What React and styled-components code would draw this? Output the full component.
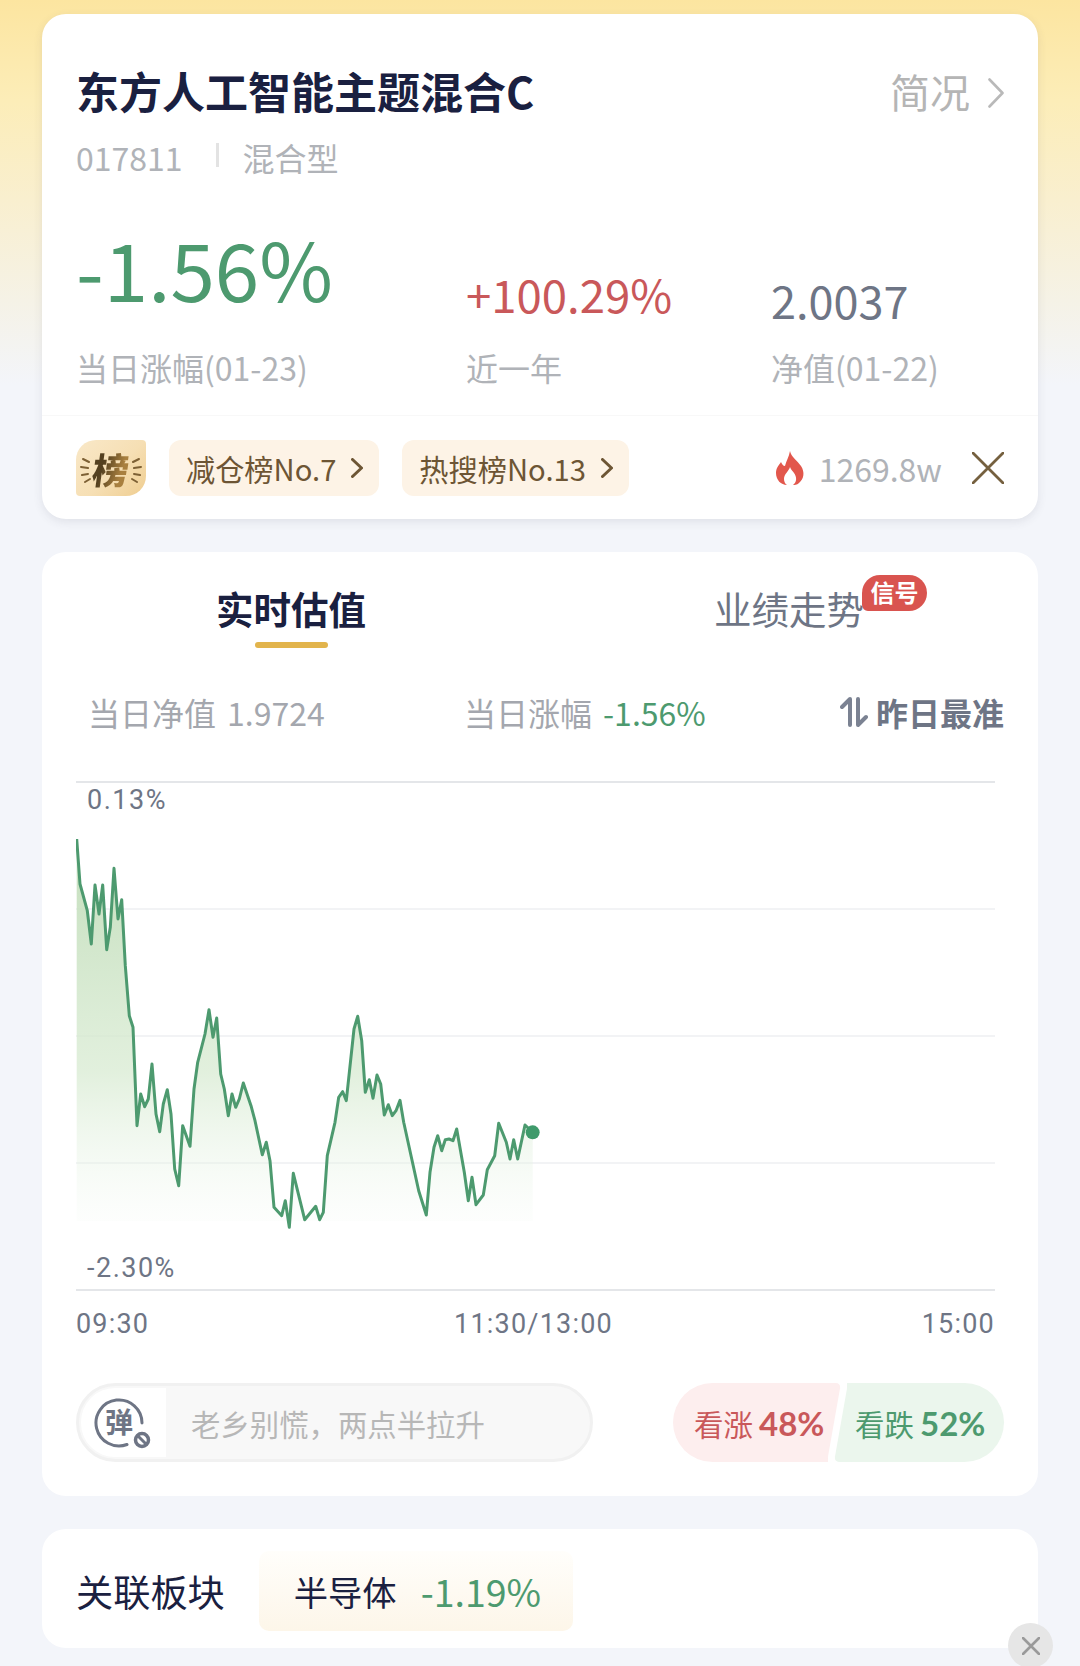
import React from 'react';
import styled, { createGlobalStyle } from 'styled-components';

const GlobalStyle = createGlobalStyle`
  html, body {
    margin: 0;
    padding: 0;
    background: #f3f5fa;
  }
  * {
    box-sizing: border-box;
  }
`;

const Page = styled.div`
  position: relative;
  width: 1080px;
  height: 1666px;
  overflow: hidden;
  padding: 14px 42px 0;
  display: flex;
  flex-direction: column;
  gap: 32px;
  font-family: "Noto Sans CJK SC", "Noto Sans", sans-serif;
  background: linear-gradient(180deg, #fce5a0 0, #fcedb8 100px, #f9efcf 200px, #f5f2e6 300px, #f3f5fa 385px);
`;

const Card = styled.section`
  background: #fff;
  border-radius: 24px;
`;

const FundCard = styled(Card)`
  height: 505px;
  margin-bottom: 1px;
  display: flex;
  flex-direction: column;
  box-shadow: 0 3px 10px rgba(60, 60, 80, 0.1);
`;

const FundHead = styled.div`
  flex: 1;
  padding: 48px 34px 0;
`;

const TitleRow = styled.div`
  display: flex;
  justify-content: space-between;
  align-items: center;
  height: 56px;
`;

const Title = styled.h1`
  margin: 0;
  font-size: 43px;
  font-weight: 700;
  color: #1a2040;
  line-height: 56px;
`;

const Brief = styled.div`
  display: flex;
  align-items: center;
  gap: 18px;
  margin-top: 2px;
  font-size: 40px;
  line-height: 56px;
  color: #b5b5b5;
  svg {
    margin-top: 3px;
  }
`;

const SubRow = styled.div`
  display: flex;
  align-items: center;
  height: 40px;
  margin-top: 19px;
  font-size: 32px;
  line-height: 40px;
  color: #b0b3b8;
`;

const SubDivider = styled.i`
  width: 3px;
  height: 24px;
  margin: -4px 24px 0 33px;
  background: #e3e3e3;
`;

const Stats = styled.div`
  display: grid;
  grid-template-columns: 390px 305px 1fr;
  height: 211px;
`;

const Stat = styled.div`
  display: flex;
  flex-direction: column;
  justify-content: flex-end;
`;

const StatValue = styled.div`
  font-size: ${(p) => p.$size}px;
  line-height: ${(p) => p.$size + 10}px;
  color: ${(p) => p.$color};
  margin-bottom: ${(p) => p.$gap}px;
`;

const StatLabel = styled.div`
  font-size: 32px;
  line-height: 42px;
  color: #b0b3b8;
  white-space: nowrap;
`;

const Strip = styled.div`
  height: 104px;
  flex: none;
  display: flex;
  align-items: center;
  padding: 0 34px;
  border-top: 1px solid #f8f8f8;
  border-radius: 0 0 24px 24px;
`;

const RankBadge = styled.div`
  position: relative;
  width: 70px;
  height: 56px;
  margin-right: 23px;
  display: flex;
  align-items: center;
  justify-content: center;
  border-radius: 20px 4px 20px 4px;
  background: linear-gradient(135deg, #f9e8c8 0, #f6dfb4 55%, #efcd90 100%);
  svg {
    position: absolute;
    left: 0;
    top: 0;
  }
`;

const RankGlyph = styled.span`
  font-size: 36px;
  line-height: 56px;
  font-weight: 900;
  transform: skewX(-8deg);
  background: linear-gradient(100deg, #54401f 30%, #a9803f 75%);
  -webkit-background-clip: text;
  background-clip: text;
  color: transparent;
`;

const RankTag = styled.div`
  height: 56px;
  display: flex;
  align-items: center;
  gap: 15px;
  padding: 0 16px 0 17px;
  margin-right: 23px;
  border-radius: 12px;
  background: #fdf3e6;
  color: #6d5534;
  font-size: 29.2px;
  white-space: nowrap;
`;

const Heat = styled.div`
  margin-left: auto;
  display: flex;
  align-items: center;
  gap: 14px;
  font-size: 32px;
  color: #b0b3b8;
`;

const StripClose = styled.div`
  margin-left: 30px;
  display: flex;
  align-items: center;
`;

const ChartCard = styled(Card)`
  height: 944px;
  padding-top: 32px;
`;

const Tabs = styled.div`
  display: grid;
  grid-template-columns: 1fr 1fr;
`;

const Tab = styled.div`
  position: relative;
  display: flex;
  flex-direction: column;
  align-items: center;
`;

const TabText = styled.div`
  position: relative;
  font-size: 37.5px;
  line-height: 48px;
  font-weight: ${(p) => (p.$active ? 700 : 400)};
  color: ${(p) => (p.$active ? '#1a2040' : '#6e7585')};
`;

const TabMark = styled.i`
  width: 73px;
  height: 6px;
  margin-top: 10px;
  border-radius: 3px;
  background: #e2b44c;
`;

const SignalBadge = styled.span`
  position: absolute;
  left: 148px;
  top: -9px;
  width: 65px;
  height: 36px;
  border-radius: 18px 18px 18px 6px;
  background: #d9544f;
  color: #fff;
  font-size: 24px;
  line-height: 34px;
  font-weight: 700;
  text-align: center;
`;

const InfoRow = styled.div`
  display: grid;
  grid-template-columns: 376px 1fr auto;
  align-items: center;
  height: 44px;
  margin-top: 41px;
  padding: 0 34px 0 46px;
  font-size: 32px;
  color: #a4a7ae;
`;

const InfoItem = styled.div`
  display: flex;
  gap: 11px;
  white-space: nowrap;
`;

const InfoValue = styled.span`
  color: ${(p) => p.$color || 'inherit'};
`;

const BestTag = styled.div`
  display: flex;
  align-items: center;
  gap: 8px;
  font-size: 32px;
  font-weight: 700;
  color: #6e7585;
`;

const Chart = styled.div`
  position: relative;
  height: 510px;
  margin: 48px 43px 0 34px;
  display: flex;
  flex-direction: column;
  justify-content: space-between;
`;

const GridLine = styled.i`
  display: block;
  height: 2px;
  background: ${(p) => (p.$strong ? '#e4e6e9' : '#f2f3f5')};
`;

const ChartPlot = styled.svg`
  position: absolute;
  left: 0;
  top: 0;
`;

const ChartLabel = styled.span`
  position: absolute;
  left: 11px;
  font-family: Roboto, sans-serif;
  font-size: 27px;
  line-height: 32px;
  letter-spacing: 1.5px;
  color: #6e7585;
  ${(p) => (p.$bottom ? 'bottom: 7px;' : 'top: 3px;')}
`;

const AxisRow = styled.div`
  display: grid;
  grid-template-columns: 1fr auto 1fr;
  margin: 17px 43px 0 34px;
  font-family: Roboto, sans-serif;
  font-size: 27px;
  line-height: 32px;
  letter-spacing: 1.2px;
  color: #6e7585;
  span:nth-child(2) {
    margin-right: 4px;
  }
  span:last-child {
    text-align: right;
  }
`;

const ActionRow = styled.div`
  display: flex;
  justify-content: space-between;
  align-items: center;
  margin-top: 43px;
  padding: 0 34px;
`;

const CommentBox = styled.div`
  width: 517px;
  height: 79px;
  display: flex;
  align-items: center;
  padding: 2px;
  overflow: hidden;
  border: 3px solid #f1f1f1;
  border-radius: 40px;
  background: #f8f8f8;
  color: #b7b7b7;
  font-size: 29.4px;
`;

const CommentIcon = styled.div`
  width: 85px;
  height: 100%;
  margin-right: 25px;
  display: flex;
  align-items: center;
  justify-content: center;
  background: #fff;
  border-radius: 34px 0 0 34px;
`;

const Votes = styled.div`
  display: flex;
  width: 331px;
  height: 79px;
`;

const Vote = styled.div`
  position: relative;
  z-index: 0;
  display: flex;
  align-items: center;
  gap: 6px;
  font-size: 29.5px;
  color: ${(p) => p.$color};
  background: ${(p) => p.$bg};
  ${(p) => (p.$left
    ? 'width: 155px; padding-left: 21px; border-radius: 40px 0 0 40px; margin-right: 19px;'
    : 'flex: 1; padding-left: 8px; border-radius: 0 40px 40px 0;')}
  &::after {
    content: '';
    position: absolute;
    z-index: -1;
    top: 0;
    bottom: 0;
    width: 20px;
    ${(p) => (p.$left ? 'right: -6px;' : 'left: -6px;')}
    background: ${(p) => p.$bg};
    border-radius: 5px;
    transform: skewX(-10deg);
  }
`;

const VotePct = styled.b`
  font-family: Lato, "Noto Sans", sans-serif;
  font-size: 33px;
  font-weight: 700;
`;

const SectorCard = styled(Card)`
  height: 119px;
  margin-top: 1px;
  display: flex;
  align-items: center;
  padding: 4px 34px 0;
`;

const SectorTitle = styled.div`
  font-size: 37.2px;
  color: #1a2040;
  margin-right: 34px;
`;

const SectorChip = styled.div`
  width: 314px;
  height: 80px;
  display: flex;
  align-items: center;
  gap: 24px;
  padding-left: 35px;
  border-radius: 10px;
  background: linear-gradient(180deg, #fffefb, #fdf6e9);
  font-size: 34.3px;
  color: #1a2040;
`;

const SectorPct = styled.span`
  font-size: 37.5px;
  color: #4d9a6f;
`;

const FloatClose = styled.div`
  position: absolute;
  left: 1008px;
  top: 1623px;
  width: 45px;
  height: 45px;
  border-radius: 50%;
  background: #e6e6e6;
  display: flex;
  align-items: center;
  justify-content: center;
`;

const Chevron = ({ size = 12, height = 22, width = 3, color = 'currentColor' }) => (
  <svg width={size} height={height} viewBox={`0 0 ${size} ${height}`} fill="none">
    <path d={`M1.5 1.5 L${size - 1.5} ${height / 2} L1.5 ${height - 1.5}`} stroke={color} strokeWidth={width} strokeLinecap="round" strokeLinejoin="round" />
  </svg>
);

const Cross = ({ size, color, width }) => (
  <svg width={size} height={size} viewBox={`0 0 ${size} ${size}`}>
    <path d={`M1 1 L${size - 1} ${size - 1} M${size - 1} 1 L1 ${size - 1}`} stroke={color} strokeWidth={width} strokeLinecap="round" />
  </svg>
);

const Flame = () => (
  <svg width="30" height="34" viewBox="0 0 30 34">
    <path
      fill="#e2574c"
      d="M15 0 C16 6 22 9 26 15 C30 21 29 28 24 32 C22 34 19 34 18 34 C22 31 22 26 19 22 C18 20 16 19 15 16 C14 20 9 23 9 28 C9 30 10 33 12 34 C6 34 1 29 1 22 C1 17 4 14 6 11 C7 13 8 15 10 15 C11 10 14 6 15 0 Z"
    />
  </svg>
);

const SortArrows = () => (
  <svg width="28" height="32" viewBox="0 0 28 32" fill="none" stroke="#7b8292" strokeWidth="4" strokeLinecap="round" strokeLinejoin="round">
    <path d="M10 29 V3 L2 11" />
    <path d="M18 3 V29 L26 21" />
  </svg>
);

const Laurels = () => (
  <svg width="70" height="56" viewBox="0 0 70 56" fill="none" stroke="#7d6034" strokeWidth="2" strokeLinecap="round">
    <path d="M7 19 L13 22 M5 27 L12 28 M6 35 L12 34 M9 42 L14 39" />
    <path d="M63 19 L57 22 M65 27 L58 28 M64 35 L58 34 M61 42 L56 39" />
  </svg>
);

const DanmakuIcon = () => (
  <svg width="60" height="60" viewBox="0 0 60 60" fill="none">
    <path d="M33 51.5 A23 23 0 1 1 48 30" stroke="#6e7585" strokeWidth="3" strokeLinecap="round" />
    <text x="25" y="40" textAnchor="middle" fontSize="28" fontWeight="700" fill="#6e7585" fontFamily="Noto Sans CJK SC, sans-serif">弹</text>
    <circle cx="48" cy="47" r="6.5" stroke="#6e7585" strokeWidth="3.5" fill="#fff" />
    <path d="M44 43 L52 51" stroke="#6e7585" strokeWidth="3" />
  </svg>
);

// 坐标按参考图量出来的，换算到图表自身
const rawPoints = [
  [80,240],[90,375],[112,455],[124,555],[135,378],[147,465],[158,378],[170,572],[181,505],[192,328],[204,480],[215,422],
  [226,620],[238,770],[249,805],[261,1100],[272,1005],[284,1043],[295,1020],[306,915],[318,1065],[329,1118],[340,1035],
  [352,992],[363,1065],[374,1230],[386,1280],[398,1100],[420,1162],[432,990],[443,910],[465,825],[477,752],[489,835],
  [500,777],[512,945],[523,990],[535,1070],[546,1005],[557,1045],[568,1020],[580,972],[603,1040],[615,1085],[637,1187],
  [649,1150],[660,1205],[672,1345],[695,1370],[706,1325],[718,1405],[730,1243],[764,1382],[797,1342],[809,1382],[820,1360],
  [832,1190],[855,1090],[866,1015],[878,998],[889,1025],[912,810],[923,772],[935,845],[946,1000],[958,962],[969,1018],
  [981,948],[992,975],[1003,1068],[1015,1037],[1027,1070],[1038,1055],[1050,1024],[1061,1090],[1106,1295],[1129,1368],
  [1140,1240],[1152,1165],[1163,1130],[1175,1175],[1186,1142],[1197,1140],[1209,1145],[1220,1110],[1243,1240],[1255,1325],
  [1266,1255],[1278,1337],[1300,1308],[1312,1232],[1334,1190],[1346,1093],[1369,1150],[1380,1200],[1391,1142],[1403,1200],
  [1425,1098],[1448,1120],
];

const points = rawPoints.map(([x, y]) => [x / 3 + 50 - 76, y / 3 + 760 - 782]);
const linePath = points.map(([x, y]) => `${x.toFixed(1)},${y.toFixed(1)}`).join(' ');
const lastX = points[points.length - 1][0];
const firstX = points[0][0];
const areaPath = `${linePath} ${lastX.toFixed(1)},440 ${firstX.toFixed(1)},440`;

const PriceChart = () => (
  <Chart>
    <GridLine $strong />
    <GridLine />
    <GridLine />
    <GridLine />
    <GridLine $strong />
    <ChartPlot width="919" height="510" viewBox="0 0 919 510" fill="none">
      <defs>
        <linearGradient id="areaFill" x1="0" y1="0" x2="0" y2="1">
          <stop offset="0" stopColor="#c0dcb8" stopOpacity="0.95" />
          <stop offset="0.6" stopColor="#d8ebd2" stopOpacity="0.75" />
          <stop offset="1" stopColor="#eef7ee" stopOpacity="0.1" />
        </linearGradient>
      </defs>
      <polygon points={areaPath} fill="url(#areaFill)" />
      <polyline points={linePath} stroke="#4d9a6f" strokeWidth="3" strokeLinejoin="round" />
      <circle cx={lastX} cy={points[points.length - 1][1]} r="7" fill="#3f9a6b" />
    </ChartPlot>
    <ChartLabel>0.13%</ChartLabel>
    <ChartLabel $bottom>-2.30%</ChartLabel>
  </Chart>
);

export default function App() {
  return (
    <Page>
      <GlobalStyle />
      <FundCard>
        <FundHead>
          <TitleRow>
            <Title>东方人工智能主题混合C</Title>
            <Brief>
              简况
              <Chevron size={16} height={30} width={2.6} color="#b9b9b9" />
            </Brief>
          </TitleRow>
          <SubRow>
            017811
            <SubDivider />
            混合型
          </SubRow>
          <Stats>
            <Stat>
              <StatValue $size={80} $color="#4d9a6f" $gap={34}>-1.56%</StatValue>
              <StatLabel>当日涨幅(01-23)</StatLabel>
            </Stat>
            <Stat>
              <StatValue $size={45.5} $color="#c9585a" $gap={25}>+100.29%</StatValue>
              <StatLabel>近一年</StatLabel>
            </Stat>
            <Stat>
              <StatValue $size={45} $color="#6e7585" $gap={19}>2.0037</StatValue>
              <StatLabel>净值(01-22)</StatLabel>
            </Stat>
          </Stats>
        </FundHead>
        <Strip>
          <RankBadge>
            <Laurels />
            <RankGlyph>榜</RankGlyph>
          </RankBadge>
          <RankTag>
            减仓榜No.7
            <Chevron size={12} height={20} width={3} color="#6d5534" />
          </RankTag>
          <RankTag>
            热搜榜No.13
            <Chevron size={12} height={20} width={3} color="#6d5534" />
          </RankTag>
          <Heat>
            <Flame />
            1269.8w
          </Heat>
          <StripClose>
            <Cross size={32} color="#75603f" width={2.8} />
          </StripClose>
        </Strip>
      </FundCard>

      <ChartCard>
        <Tabs>
          <Tab>
            <TabText $active>实时估值</TabText>
            <TabMark />
          </Tab>
          <Tab>
            <TabText>
              业绩走势
              <SignalBadge>信号</SignalBadge>
            </TabText>
          </Tab>
        </Tabs>
        <InfoRow>
          <InfoItem>
            当日净值
            <InfoValue>1.9724</InfoValue>
          </InfoItem>
          <InfoItem>
            当日涨幅
            <InfoValue $color="#4d9a6f">-1.56%</InfoValue>
          </InfoItem>
          <BestTag>
            <SortArrows />
            昨日最准
          </BestTag>
        </InfoRow>
        <PriceChart />
        <AxisRow>
          <span>09:30</span>
          <span>11:30/13:00</span>
          <span>15:00</span>
        </AxisRow>
        <ActionRow>
          <CommentBox>
            <CommentIcon>
              <DanmakuIcon />
            </CommentIcon>
            老乡别慌，两点半拉升
          </CommentBox>
          <Votes>
            <Vote $left $bg="#fdeeee" $color="#c9585a">
              看涨 <VotePct>48%</VotePct>
            </Vote>
            <Vote $bg="#ebf6ed" $color="#4d9a6f">
              看跌 <VotePct>52%</VotePct>
            </Vote>
          </Votes>
        </ActionRow>
      </ChartCard>

      <SectorCard>
        <SectorTitle>关联板块</SectorTitle>
        <SectorChip>
          半导体
          <SectorPct>-1.19%</SectorPct>
        </SectorChip>
      </SectorCard>

      <FloatClose>
        <Cross size={18} color="#9a9a9a" width={2.6} />
      </FloatClose>
    </Page>
  );
}
